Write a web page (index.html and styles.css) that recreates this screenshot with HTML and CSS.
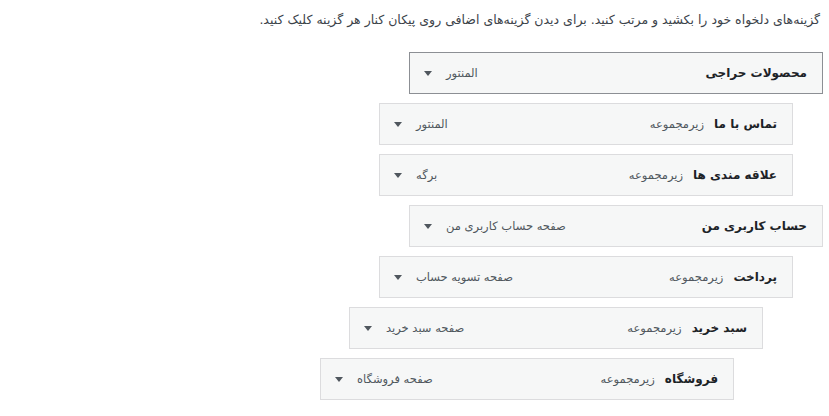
FILE: index.html
```html
<!DOCTYPE html>
<html lang="fa" dir="rtl">
<head>
  <meta charset="UTF-8">
  <title>فهرست‌ها</title>
  <link rel="stylesheet" href="styles.css">
</head>
<body>
  <div class="menu-edit">
    <p class="drag-instructions">گزینه‌های دلخواه خود را بکشید و مرتب کنید. برای دیدن گزینه‌های اضافی روی پیکان کنار هر گزینه کلیک کنید.</p>
    <ul class="menu">
      <li class="menu-item depth-0 active">
        <div class="item-handle">
          <span class="item-title"><span class="title">محصولات حراجی</span></span>
          <span class="item-controls"><span class="item-type">المنتور</span><span class="item-edit"></span></span>
        </div>
      </li>
      <li class="menu-item depth-1">
        <div class="item-handle">
          <span class="item-title"><span class="title">تماس با ما</span><span class="is-submenu">زیرمجموعه</span></span>
          <span class="item-controls"><span class="item-type">المنتور</span><span class="item-edit"></span></span>
        </div>
      </li>
      <li class="menu-item depth-1">
        <div class="item-handle">
          <span class="item-title"><span class="title">علاقه مندی ها</span><span class="is-submenu">زیرمجموعه</span></span>
          <span class="item-controls"><span class="item-type">برگه</span><span class="item-edit"></span></span>
        </div>
      </li>
      <li class="menu-item depth-0">
        <div class="item-handle">
          <span class="item-title"><span class="title">حساب کاربری من</span></span>
          <span class="item-controls"><span class="item-type">صفحه حساب کاربری من</span><span class="item-edit"></span></span>
        </div>
      </li>
      <li class="menu-item depth-1">
        <div class="item-handle">
          <span class="item-title"><span class="title">پرداخت</span><span class="is-submenu">زیرمجموعه</span></span>
          <span class="item-controls"><span class="item-type">صفحه تسویه حساب</span><span class="item-edit"></span></span>
        </div>
      </li>
      <li class="menu-item depth-2">
        <div class="item-handle">
          <span class="item-title"><span class="title">سبد خرید</span><span class="is-submenu">زیرمجموعه</span></span>
          <span class="item-controls"><span class="item-type">صفحه سبد خرید</span><span class="item-edit"></span></span>
        </div>
      </li>
      <li class="menu-item depth-3">
        <div class="item-handle">
          <span class="item-title"><span class="title">فروشگاه</span><span class="is-submenu">زیرمجموعه</span></span>
          <span class="item-controls"><span class="item-type">صفحه فروشگاه</span><span class="item-edit"></span></span>
        </div>
      </li>
    </ul>
  </div>
</body>
</html>
```

FILE: styles.css
```css
html, body {
  margin: 0;
  padding: 0;
  background: #fff;
  color: #3c434a;
  font-family: "DejaVu Sans", Tahoma, sans-serif;
  font-size: 13px;
}
.menu-edit {
  padding: 10px 6px 0 0;
}
.drag-instructions {
  margin: 0 3px 0 0;
  font-size: 12.5px;
  line-height: 20px;
}
.menu {
  list-style: none;
  margin: 0;
  padding: 13px 0 0;
}
.menu-item {
  margin: 9px 0 0;
}
.depth-0 { margin-right: 0; }
.depth-1 { margin-right: 30px; }
.depth-2 { margin-right: 60px; }
.depth-3 { margin-right: 89px; }
.item-handle {
  width: 414px;
  height: 42px;
  box-sizing: border-box;
  border: 1px solid #dcdcde;
  background: #f6f7f7;
  display: flex;
  align-items: center;
  justify-content: space-between;
  padding: 0 15px 0 14px;
}
.active .item-handle {
  border-color: #8c8f94;
}
.item-title {
  display: flex;
  align-items: center;
  gap: 10px;
}
.title {
  font-weight: 700;
  color: #1d2327;
  font-size: 12px;
}
.is-submenu {
  color: #50575e;
  font-size: 11.5px;
}
.item-controls {
  display: flex;
  align-items: center;
  gap: 14px;
}
.item-type {
  color: #50575e;
  font-size: 11.5px;
}
.item-edit {
  width: 0;
  height: 0;
  border-left: 4px solid transparent;
  border-right: 4px solid transparent;
  border-top: 5px solid #50575e;
}
```
